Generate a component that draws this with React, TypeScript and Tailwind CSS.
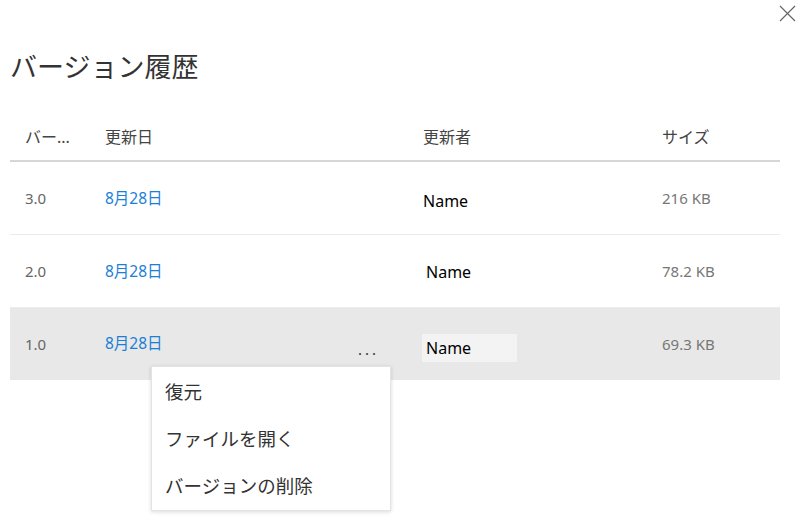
// Version history dialog with an open row context menu.
const rows = [
  { version: "3.0", date: "8月28日", author: "Name", size: "216 KB" },
  { version: "2.0", date: "8月28日", author: "Name", size: "78.2 KB" },
  { version: "1.0", date: "8月28日", author: "Name", size: "69.3 KB", selected: true },
];

const menuItems = ["復元", "ファイルを開く", "バージョンの削除"];

export default function App() {
  return (
    <div className="relative h-[523px] w-[800px] overflow-hidden bg-white font-['Noto_Sans','Noto_Sans_CJK_JP',sans-serif] text-[#333]">
      <button className="absolute right-[3px] top-[4px] p-[1px] text-[#666]">
        <svg width="17" height="17" viewBox="0 0 17 17" fill="none" stroke="currentColor" strokeWidth="1.2">
          <path d="M1 1L16 16M16 1L1 16" />
        </svg>
      </button>

      <div className="px-[10px] pt-[49px]">
        <h1 className="text-[27px] leading-[36px] font-normal text-[#333]">バージョン履歴</h1>

        <div className="mt-[28px] w-[770px]">
          <div className="grid h-[49px] grid-cols-[80px_318px_239px_1fr] items-center border-b-2 border-[#d6d6d6] pl-[15px] text-[16px] text-[#444]">
            <span className="mt-[1px]">バー...</span>
            <span className="mt-[1px]">更新日</span>
            <span className="mt-[1px]">更新者</span>
            <span className="mt-[1px]">サイズ</span>
          </div>

          {rows.map((r, i) => (
            <div
              key={r.version}
              className={
                r.selected
                  ? "grid h-[72px] grid-cols-[80px_318px_239px_1fr] items-center bg-[#e8e8e8] pl-[15px] text-[15px]"
                  : "grid h-[73px] grid-cols-[80px_318px_239px_1fr] items-center border-b border-[#ececec] pl-[15px] pt-[1px] text-[15px]"
              }
            >
              <span className="text-[#666]">{r.version}</span>
              <div className="flex items-center justify-between pr-[44px]">
                <span className="text-[15.5px] text-[#1a7fd6]">{r.date}</span>
                {r.selected && <span className="mt-[10px] tracking-[3px] text-[#333]">...</span>}
              </div>
              <div className={i === 1 ? "pl-[3px]" : ""}>
                {r.selected ? (
                  <span className="-ml-[1px] mt-[8px] flex h-[28px] w-[95px] items-center bg-[#f3f3f3] pl-[4px] text-[16px] text-black">
                    {r.author}
                  </span>
                ) : (
                  <span className={i === 0 ? "mt-[4px] block text-[16px] text-black" : "block text-[16px] text-black"}>
                    {r.author}
                  </span>
                )}
              </div>
              <span className="text-[#777]">{r.size}</span>
            </div>
          ))}
        </div>
      </div>

      <div className="absolute left-[151px] top-[366px] flex h-[145px] w-[240px] flex-col justify-center border border-[#e4e4e4] bg-white shadow-[0_1px_4px_rgba(0,0,0,0.15)]">
        {menuItems.map((m) => (
          <div key={m} className="flex h-[47px] items-center px-[13px] text-[18.5px] text-[#333]">
            {m}
          </div>
        ))}
      </div>
    </div>
  );
}
